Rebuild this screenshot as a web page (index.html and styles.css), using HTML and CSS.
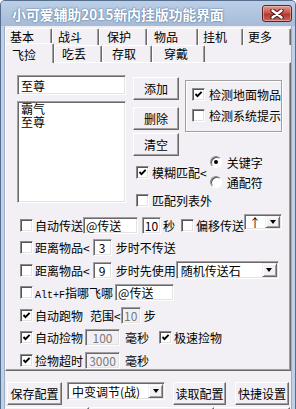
FILE: index.html
```html
<!DOCTYPE html>
<html lang="zh-CN">
<head>
    <meta charset="UTF-8">
    <title>小可爱辅助</title>
    <link rel="stylesheet" href="styles.css">
</head>
<body>
    <div class="window">
        <div class="titlebar">
            <span class="title">小可爱辅助2015新内挂版功能界面</span>
            <span class="close">
                <svg width="14" height="10" viewBox="0 0 14 10">
                    <path d="M2.5 1.5L11.5 8.5M11.5 1.5L2.5 8.5" stroke="#4a1818" stroke-width="4.4" stroke-linecap="round"/>
                    <path d="M2.5 1.5L11.5 8.5M11.5 1.5L2.5 8.5" stroke="#fff" stroke-width="2.4" stroke-linecap="round"/>
                </svg>
            </span>
        </div>
        <div class="client">
            <div class="tabrow first">
                <span class="tab">基本</span>
                <span class="tab">战斗</span>
                <span class="tab">保护</span>
                <span class="tab">物品</span>
                <span class="tab">挂机</span>
                <span class="tab">更多</span>
            </div>
            <div class="tabrow second">
                <span class="tab active">飞捡</span>
                <span class="tab">吃丢</span>
                <span class="tab">存取</span>
                <span class="tab">穿戴</span>
            </div>
            <div class="panel">
                <div class="top">
                    <div class="leftcol">
                        <div class="field big">至尊</div>
                        <div class="listbox">
                            <div>霸气</div>
                            <div>至尊</div>
                        </div>
                    </div>
                    <div class="rightcol">
                        <div class="actions">
                            <div class="btncol">
                                <span class="btn add">添加</span>
                                <span class="btn del">删除</span>
                                <span class="btn clr">清空</span>
                            </div>
                            <div class="group">
                                <div class="gline"><span class="cb on"><svg viewBox="0 0 11 11"><path d="M2.5 5L4.5 7.2L8.6 2.8"/></svg></span><span class="glabel">检测地面物品</span></div>
                                <div class="gline"><span class="cb"></span><span class="glabel">检测系统提示</span></div>
                            </div>
                        </div>
                        <div class="match">
                            <span class="cb on"><svg viewBox="0 0 11 11"><path d="M2.5 5L4.5 7.2L8.6 2.8"/></svg></span>
                            <span class="mlabel">模糊匹配&lt;</span>
                            <div class="radios">
                                <div class="rline"><span class="rb on"></span><span>关键字</span></div>
                                <div class="rline"><span class="rb"></span><span>通配符</span></div>
                            </div>
                        </div>
                        <div class="outside">
                            <span class="cb"></span>
                            <span class="mlabel">匹配列表外</span>
                        </div>
                    </div>
                </div>

                <div class="rows">
                    <div class="row">
                        <span class="cb"></span>
                        <span class="lbl">自动传送</span>
                        <span class="field w55 left">@传送</span>
                        <span class="field w19 sp4">10</span>
                        <span class="sp2">秒</span>
                        <span class="cb sp6"></span>
                        <span class="lbl">偏移传送</span>
                        <span class="combo w38 up"><span class="ctext">↑</span><span class="drop"><i></i></span></span>
                    </div>
                    <div class="row">
                        <span class="cb"></span>
                        <span class="lbl">距离物品&lt;</span>
                        <span class="field w19 sp3">3</span>
                        <span class="sp4">步时不传送</span>
                    </div>
                    <div class="row">
                        <span class="cb"></span>
                        <span class="lbl">距离物品&lt;</span>
                        <span class="field w19 sp3">9</span>
                        <span class="sp4">步时先使用</span>
                        <span class="combo w103 stone"><span class="ctext">随机传送石</span><span class="drop"><i></i></span></span>
                    </div>
                    <div class="row">
                        <span class="cb"></span>
                        <span class="lbl"><span class="mono">Alt+F</span>指哪飞哪</span>
                        <span class="field w59 left sp2">@传送</span>
                    </div>
                    <div class="row">
                        <span class="cb on"><svg viewBox="0 0 11 11"><path d="M2.5 5L4.5 7.2L8.6 2.8"/></svg></span>
                        <span class="lbl">自动跑物</span>
                        <span class="sp7">范围&lt;</span>
                        <span class="field w20 off">10</span>
                        <span class="sp3">步</span>
                    </div>
                    <div class="row">
                        <span class="cb on"><svg viewBox="0 0 11 11"><path d="M2.5 5L4.5 7.2L8.6 2.8"/></svg></span>
                        <span class="lbl">自动捡物</span>
                        <span class="field w35 off sp2">100</span>
                        <span class="sp5">毫秒</span>
                        <span class="cb on sp10"><svg viewBox="0 0 11 11"><path d="M2.5 5L4.5 7.2L8.6 2.8"/></svg></span>
                        <span class="lbl">极速捡物</span>
                    </div>
                    <div class="row">
                        <span class="cb on"><svg viewBox="0 0 11 11"><path d="M2.5 5L4.5 7.2L8.6 2.8"/></svg></span>
                        <span class="lbl">捡物超时</span>
                        <span class="field w35 off sp2">3000</span>
                        <span class="sp5">毫秒</span>
                    </div>
                </div>
            </div>

            <div class="footer">
                <span class="btn save">保存配置</span>
                <span class="combo w98 preset"><span class="ctext">中变调节(战)</span><span class="drop"><i></i></span></span>
                <span class="btn load">读取配置</span>
                <span class="btn keys">快捷设置</span>
            </div>
            <div class="footer more">
                <span class="btn b1"></span>
                <span class="btn b2"></span>
                <span class="btn b3"></span>
            </div>
        </div>
    </div>
</body>
</html>
```

FILE: styles.css
```css
*{
    margin: 0;
    padding: 0;
    box-sizing: border-box;
}
body{
    width: 296px;
    height: 409px;
    overflow: hidden;
    background: #fff;
    font: 12px "Noto Sans CJK SC", sans-serif;
    color: #000;
}
.window{
    width: 296px;
    height: 409px;
    display: flex;
    flex-direction: column;
    background: #bed1e9;
    border: 1px solid #566e8e;
    border-bottom: none;
    border-radius: 5px 5px 0 0;
    overflow: hidden;
}
.titlebar{
    height: 25px;
    flex-shrink: 0;
    display: flex;
    align-items: center;
    padding: 0 3px 0 11px;
    background: linear-gradient(#bccfe7, #a6bbd7);
}
.title{
    color: #fff;
    font-size: 14px;
    font-weight: bold;
    letter-spacing: -0.2px;
    text-shadow: 0 0 2px #52739c, 0 0 1px #52739c;
}
.close{
    margin-left: auto;
    width: 30px;
    height: 17px;
    display: flex;
    align-items: center;
    justify-content: center;
    border: 1px solid #5e2424;
    border-radius: 3px;
    background: linear-gradient(#e09a8e, #c9574a 45%, #b03a2e 55%, #c8675a);
    box-shadow: inset 0 0 0 1px rgba(255, 220, 210, 0.45);
}
.client{
    flex: 1;
    margin: 0 3px;
    background: #f2f0f4;
    border-left: 1px solid #9cadc4;
    border-right: 1px solid #9cadc4;
    padding-top: 2px;
}

/* tabs */
.tabrow{
    display: flex;
    height: 17px;
}
.tab{
    height: 17px;
    line-height: 15px;
    border-top: 1px solid #fff;
    border-left: 1px solid #fff;
    border-right: 1px solid #696969;
    box-shadow: inset -1px 0 #a0a0a0;
    border-radius: 2px 2px 0 0;
    white-space: nowrap;
}
.first .tab:nth-child(1){ width: 47px; padding-left: 4px; }
.first .tab:nth-child(2){ width: 47px; padding-left: 5px; }
.first .tab:nth-child(3){ width: 48px; padding-left: 7px; }
.first .tab:nth-child(4){ width: 51px; padding-left: 6px; }
.first .tab:nth-child(5){ width: 45px; padding-left: 4px; }
.first .tab:nth-child(6){ width: 48px; padding-left: 4px; }
.second .tab:nth-child(1){ width: 49px; padding-left: 6px; }
.second .tab:nth-child(2){ width: 48px; padding-left: 7px; }
.second .tab:nth-child(3){ width: 50px; padding-left: 9px; }
.second .tab:nth-child(4){ width: 53px; padding-left: 11px; }
.tab.active{
    position: relative;
    z-index: 1;
    height: 20px;
    margin-top: -2px;
    padding-top: 3px;
    background: #f2f0f4;
}

/* panel */
.panel{
    height: 309px;
    border-top: 1px solid #fff;
    border-left: 1px solid #fff;
    border-right: 1px solid #696969;
    border-bottom: 1px solid #696969;
    box-shadow: inset -1px -1px #a0a0a0;
}
.top{
    display: flex;
    margin-top: 12px;
    padding-left: 11px;
}
.leftcol{
    width: 109px;
}
.field{
    display: inline-flex;
    align-items: center;
    justify-content: center;
    height: 17px;
    background: #fff;
    border: 1px solid;
    border-color: #a0a0a0 #fff #fff #a0a0a0;
    box-shadow: inset 1px 1px #696969, inset -1px -1px #e3e3e3;
    white-space: nowrap;
    flex-shrink: 0;
}
.field.big{
    display: flex;
    justify-content: flex-start;
    width: 109px;
    height: 20px;
    padding-left: 3px;
}
.field.left{
    justify-content: flex-start;
    padding-left: 2px;
}
.field.off{
    background: #f2f0f4;
    color: #7a7a7a;
}
.listbox{
    height: 102px;
    margin-top: 6px;
    padding: 0 3px;
    line-height: 13px;
    background: #fff;
    border: 1px solid;
    border-color: #a0a0a0 #fff #fff #a0a0a0;
    box-shadow: inset 1px 1px #696969, inset -1px -1px #e3e3e3;
}
.rightcol{
    margin-left: 7px;
}
.actions{
    display: flex;
}
.btncol{
    width: 46px;
    display: flex;
    flex-direction: column;
}
.btn{
    display: flex;
    align-items: center;
    justify-content: center;
    height: 23px;
    background: #f2f0f4;
    border: 1px solid;
    border-color: #fff #696969 #696969 #fff;
    box-shadow: inset -1px -1px #a0a0a0;
    white-space: nowrap;
    flex-shrink: 0;
}
.btn.add{ margin-top: 2px; }
.btn.del{ margin-top: 7px; }
.btn.clr{ margin-top: 3px; }
.group{
    width: 97px;
    height: 52px;
    margin: 5px 0 0 6px;
    padding: 7px 0 0 6px;
    border: 1px solid #a0a0a0;
    box-shadow: inset 1px 1px #fff, 1px 1px #fff;
    display: flex;
    flex-direction: column;
    gap: 8px;
}
.gline{
    display: flex;
    align-items: center;
    height: 13px;
    white-space: nowrap;
}
.glabel{
    margin-left: 4px;
}
.cb{
    width: 13px;
    height: 13px;
    flex-shrink: 0;
    background: #fff;
    border: 1px solid;
    border-color: #8a8a8a #fff #fff #8a8a8a;
    box-shadow: inset 1px 1px #555, inset -1px -1px #e3e3e3;
    display: flex;
}
.cb svg{
    width: 11px;
    height: 11px;
}
.cb path{
    fill: none;
    stroke: #000;
    stroke-width: 1.9;
}
.match{
    display: flex;
    align-items: center;
    margin-left: 3px;
}
.mlabel{
    margin-left: 3px;
    white-space: nowrap;
}
.radios{
    display: flex;
    flex-direction: column;
    gap: 8px;
    margin-left: 3px;
}
.rline{
    display: flex;
    align-items: center;
    height: 12px;
}
.rline span:last-child{
    margin-left: 5px;
}
.rb{
    width: 12px;
    height: 12px;
    border-radius: 50%;
    background: #fff;
    border: 1px solid;
    border-color: #8a8a8a #fff #fff #8a8a8a;
    box-shadow: inset 1px 1px #555;
    display: flex;
    align-items: center;
    justify-content: center;
}
.rb.on::after{
    content: "";
    width: 4px;
    height: 4px;
    border-radius: 50%;
    background: #000;
}
.outside{
    display: flex;
    align-items: center;
    margin: 4px 0 0 3px;
}

/* option rows */
.rows{
    margin-top: 5px;
    padding-left: 14px;
    display: flex;
    flex-direction: column;
}
.row{
    display: flex;
    align-items: center;
    height: 22.5px;
    white-space: nowrap;
}
.lbl{
    margin-left: 2px;
}
.mono{
    font: 10px "Liberation Mono", monospace;
}
.w19{ width: 19px; }
.w20{ width: 20px; }
.w35{ width: 35px; }
.w38{ width: 38px; }
.w55{ width: 55px; }
.w59{ width: 59px; }
.w98{ width: 98px; }
.w103{ width: 103px; }
.sp2{ margin-left: 2px; }
.sp3{ margin-left: 3px; }
.sp4{ margin-left: 4px; }
.sp5{ margin-left: 5px; }
.sp6{ margin-left: 6px; }
.sp7{ margin-left: 7px; }
.sp10{ margin-left: 10px; }
.combo{
    display: flex;
    align-items: center;
    height: 17px;
    background: #fff;
    border: 1px solid;
    border-color: #a0a0a0 #fff #fff #a0a0a0;
    box-shadow: inset 1px 1px #696969, inset -1px -1px #e3e3e3;
    padding: 1px;
    flex-shrink: 0;
}
.combo.up{
    align-self: flex-start;
    height: 16px;
}
.combo.stone{
    height: 18px;
}
.ctext{
    flex: 1;
    padding-left: 3px;
    white-space: nowrap;
    overflow: hidden;
}
.drop{
    width: 15px;
    height: 100%;
    background: #f2f0f4;
    border: 1px solid;
    border-color: #f2f0f4 #696969 #696969 #f2f0f4;
    box-shadow: inset 1px 1px #fff, inset -1px -1px #a0a0a0;
    display: flex;
    align-items: center;
    justify-content: center;
}
.drop i{
    width: 0;
    height: 0;
    border-left: 3.5px solid transparent;
    border-right: 3.5px solid transparent;
    border-top: 4px solid #000;
}

/* bottom buttons */
.footer{
    display: flex;
    align-items: flex-start;
    margin-top: 11px;
    padding-left: 2px;
}
.btn.save{ width: 55px; }
.combo.preset{ margin-left: 5px; height: 18px; }
.btn.load{ width: 53px; margin-left: 8px; }
.btn.keys{ width: 54px; margin-left: 9px; }
.footer.more{
    margin-top: 2px;
    padding-left: 0;
}
.footer.more .btn{
    height: 10px;
}
.btn.b1{ width: 84px; }
.btn.b2{ width: 123px; margin-left: 2px; }
.btn.b3{ width: 76px; }
```
